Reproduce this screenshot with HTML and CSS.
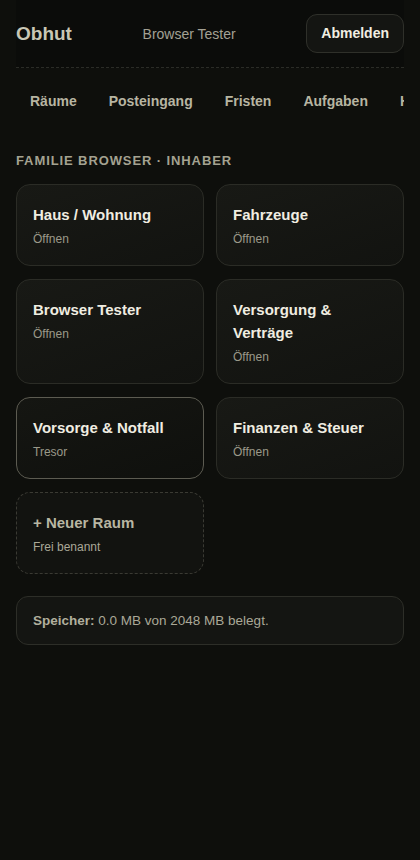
FILE: index.html
```html
<!DOCTYPE html>
<html lang="de">
<head>
  <meta charset="UTF-8">
  <title>Obhut</title>
  <link rel="stylesheet" href="styles.css">
</head>
<body>
  <div class="page">
    <header class="topbar">
      <div class="brand">Obhut</div>
      <div class="user">Browser Tester</div>
      <button class="logout">Abmelden</button>
    </header>

    <nav class="tabs">
      <a class="tab">Räume</a>
      <a class="tab">Posteingang</a>
      <a class="tab">Fristen</a>
      <a class="tab">Aufgaben</a>
      <a class="tab">Haushalt</a>
    </nav>

    <h2 class="section-title">Familie Browser · Inhaber</h2>

    <div class="rooms">
      <div class="room">
        <div class="room-name">Haus / Wohnung</div>
        <div class="room-sub">Öffnen</div>
      </div>
      <div class="room">
        <div class="room-name">Fahrzeuge</div>
        <div class="room-sub">Öffnen</div>
      </div>
      <div class="room">
        <div class="room-name">Browser Tester</div>
        <div class="room-sub">Öffnen</div>
      </div>
      <div class="room">
        <div class="room-name">Versorgung &amp; Verträge</div>
        <div class="room-sub">Öffnen</div>
      </div>
      <div class="room vault">
        <div class="room-name">Vorsorge &amp; Notfall</div>
        <div class="room-sub">Tresor</div>
      </div>
      <div class="room">
        <div class="room-name">Finanzen &amp; Steuer</div>
        <div class="room-sub">Öffnen</div>
      </div>
      <div class="room new-room">
        <div class="room-name">+ Neuer Raum</div>
        <div class="room-sub">Frei benannt</div>
      </div>
    </div>

    <div class="storage"><b>Speicher:</b> 0.0 MB von 2048 MB belegt.</div>
  </div>
</body>
</html>
```

FILE: styles.css
```css
body {
  margin: 0;
  background-color: #0e0f0c;
  font-family: "Liberation Sans", Arial, sans-serif;
  color: #efece0;
}
.page {
  padding: 0 16px;
}
.topbar {
  display: flex;
  justify-content: space-between;
  align-items: center;
  padding: 14px 0;
  background-color: #0b0c0a;
  border-bottom: 1px dashed #2b2c27;
}
.brand {
  font-size: 19px;
  font-weight: bold;
  color: #c9c7b5;
}
.user {
  font-size: 14px;
  color: #a3a194;
}
.logout {
  font-family: inherit;
  font-size: 14px;
  font-weight: bold;
  color: #f1eee2;
  background-color: #141512;
  border: 1px solid #2f302a;
  border-radius: 11px;
  padding: 10px 14px;
  line-height: 17px;
}
.tabs {
  display: flex;
  gap: 4px;
  margin-top: 15px;
  overflow: hidden;
  white-space: nowrap;
}
.tab {
  padding: 10px 14px;
  font-size: 14px;
  line-height: 17px;
  font-weight: bold;
  color: #b7b5a2;
}
.section-title {
  margin: 33px 0 15px;
  font-size: 13px;
  line-height: 16px;
  letter-spacing: 0.9px;
  text-transform: uppercase;
  color: #a4a291;
}
.rooms {
  display: grid;
  grid-template-columns: 1fr 1fr;
  gap: 13px 12px;
}
.room {
  padding: 18px 16px;
  border: 1px solid #2b2c26;
  border-radius: 14px;
  background: linear-gradient(160deg, #181915, #121310);
}
.room-name {
  font-size: 15px;
  line-height: 23px;
  font-weight: bold;
  color: #f0ede1;
}
.room-sub {
  margin-top: 5px;
  font-size: 12px;
  line-height: 16px;
  color: #9b9989;
}
.vault {
  border-color: #5c5b51;
  background: linear-gradient(160deg, #151612, #0f100d);
}
.new-room {
  border: 1px dashed #3a3a33;
  background: #121310;
}
.new-room .room-name {
  color: #b8b6a3;
}
.new-room .room-sub {
  color: #aaa897;
}
.storage {
  margin-top: 22px;
  padding: 16px;
  font-size: 13.5px;
  line-height: 15px;
  color: #aaa897;
  background-color: #141512;
  border: 1px solid #2d2e28;
  border-radius: 12px;
}
.storage b {
  color: #b1af9d;
}
```
